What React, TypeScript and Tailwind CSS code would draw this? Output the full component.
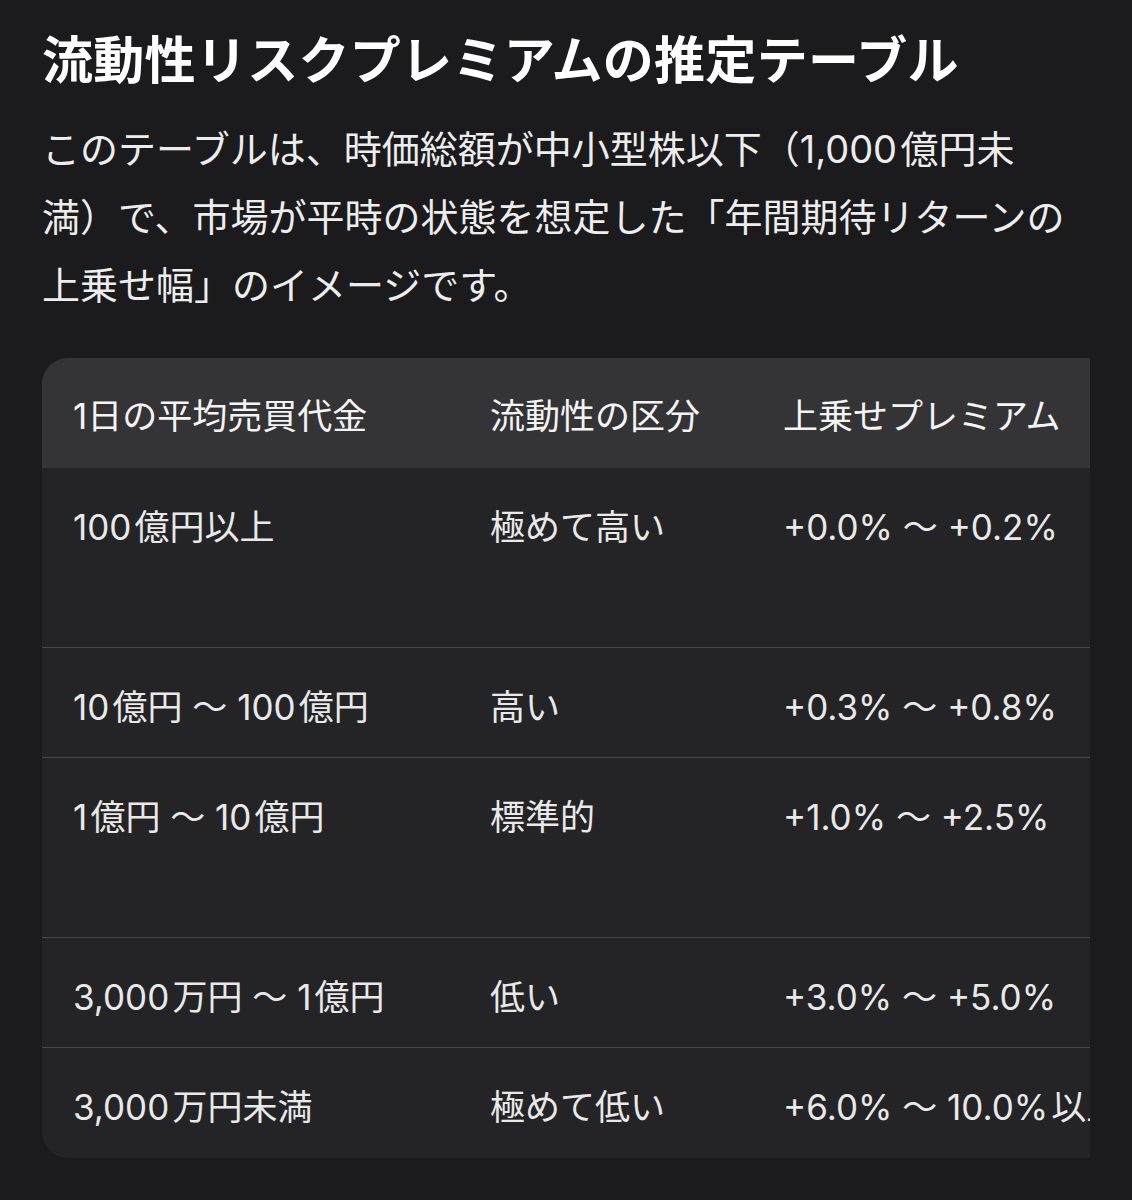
import React from "react";

const rows: { a: string; b: string; c: string; h: string; border: boolean }[] = [
  { a: "100\u200A億円以上", b: "極めて高い", c: "+0.0% 〜 +0.2%", h: "h-[179px]", border: false },
  { a: "10\u200A億円 〜 100\u200A億円", b: "高い", c: "+0.3% 〜 +0.8%", h: "h-[110px]", border: true },
  { a: "1\u200A億円 〜 10\u200A億円", b: "標準的", c: "+1.0% 〜 +2.5%", h: "h-[180px]", border: true },
  { a: "3,000\u200A万円 〜 1\u200A億円", b: "低い", c: "+3.0% 〜 +5.0%", h: "h-[110px]", border: true },
  { a: "3,000\u200A万円未満", b: "極めて低い", c: "+6.0% 〜 10.0%\u200A以上", h: "h-[111px]", border: true },
];

export default function App() {
  return (
    <div className="min-h-[1200px] w-[1132px] bg-[#1b1b1d] px-[42px] pt-[31px] font-['Inter','Noto_Sans_CJK_JP',sans-serif] text-white">
      <h1 className="whitespace-nowrap text-[51px] font-bold leading-[60px] tracking-[0.3px] text-white">
        流動性リスクプレミアムの推定テーブル
      </h1>
      <p className="mt-[24px] w-[1048px] whitespace-nowrap text-[38px] leading-[68px] text-[#ededed]">
        このテーブルは、時価総額が中小型株以下（1,000{"\u200A"}億円未
        <br />
        満）で、市場が平時の状態を想定した「年間期待リターンの
        <br />
        上乗せ幅」のイメージです。
      </p>
      <div className="mt-[39px] w-[1048px] overflow-hidden">
        <div className="w-[1400px] overflow-hidden rounded-[26px] bg-[#242426] text-[35px] leading-[52px]">
          <div className="flex h-[110px] bg-[#343437] text-[#f4f4f4]">
            <div className="w-[417px] shrink-0 whitespace-nowrap pl-[31px] pt-[32px]">1日の平均売買代金</div>
            <div className="w-[293px] shrink-0 whitespace-nowrap pl-[31px] pt-[32px]">流動性の区分</div>
            <div className="w-[400px] shrink-0 whitespace-nowrap pl-[31px] pt-[32px]">上乗せプレミアム</div>
            <div className="flex-1" />
          </div>
          {rows.map((r, i) => (
            <div
              key={i}
              className={`flex ${r.h} text-[#e9e9e9] ${r.border ? "border-t border-[#48484b]" : ""}`}
            >
              <div className="w-[417px] shrink-0 whitespace-nowrap pl-[31px] pt-[33px]">{r.a}</div>
              <div className="w-[293px] shrink-0 whitespace-nowrap pl-[31px] pt-[33px]">{r.b}</div>
              <div className="w-[400px] shrink-0 whitespace-nowrap pl-[31px] pt-[33px]">{r.c}</div>
              <div className="flex-1" />
            </div>
          ))}
        </div>
      </div>
    </div>
  );
}
